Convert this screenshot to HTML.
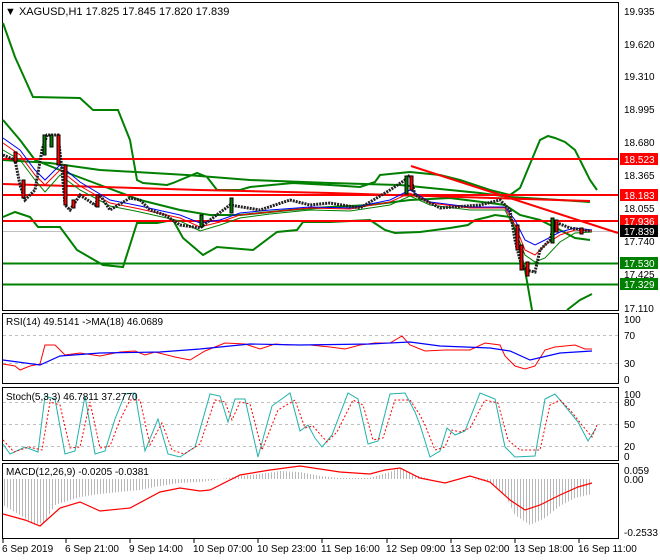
<!DOCTYPE html>
<html><head><meta charset="utf-8"><style>
html,body{margin:0;padding:0;background:#fff;}
svg{display:block;font-family:"Liberation Sans",sans-serif;}
</style></head><body>
<svg width="660" height="560" viewBox="0 0 660 560" xmlns="http://www.w3.org/2000/svg">
<defs>
<pattern id="hist" width="3" height="10" patternUnits="userSpaceOnUse"><rect x="1" y="0" width="1" height="10" fill="#b8b8b8"/></pattern>
</defs>
<rect width="660" height="560" fill="#fff"/>
<rect x="2.5" y="2.5" width="616" height="308" fill="none" stroke="#000"/>
<rect x="2.5" y="313.5" width="616" height="70" fill="none" stroke="#000"/>
<rect x="2.5" y="387.5" width="616" height="73" fill="none" stroke="#000"/>
<rect x="2.5" y="463.5" width="616" height="75" fill="none" stroke="#000"/>

<g fill="none">
<line x1="3" y1="231.5" x2="618" y2="231.5" stroke="#c0c0c0"/>
<polyline stroke="#008000" stroke-width="2" points="3,23 15,57 33,97 80,98 93,110 118,110 130,140 137,180 143,183 167,185 173,183 197,173 207,177 217,190 240,190 250,187 293,183 330,185 360,187 375,182 380,175 410,172 440,175 460,180 490,190 510,195 520,188 540,140 548,136 555,138 565,142 575,150 590,180 597,190"/>
<polyline stroke="#008000" stroke-width="2" points="3,217 15,212 30,217 38,227 60,227 77,250 103,265 123,267 137,223 157,223 173,220 183,238 203,255 217,247 253,250 277,232 297,230 303,222 330,222 370,220 385,230 395,233 420,232 450,228 468,225 475,220 488,217 495,215 510,217 515,230 525,270 532,310"/>
<polyline stroke="#008000" stroke-width="2" points="567,310 580,300 592,294"/>
<polyline stroke="#008000" stroke-width="2" points="3,120 20,140 35,160 60,170 100,185 140,200 180,210 210,215 240,215 290,210 330,207 370,205 410,200 450,198 490,203 505,205 520,215 540,220 560,230 575,238 590,240"/>
<polyline stroke="#008000" stroke-width="2" points="3,160 50,163 100,170 187,175 250,180 330,183 400,185 480,193 510,197 560,200 590,202"/>
<line x1="3" y1="159" x2="618" y2="159" stroke="#f00" stroke-width="2"/>
<line x1="3" y1="195" x2="618" y2="195" stroke="#f00" stroke-width="2"/>
<line x1="3" y1="221" x2="618" y2="221" stroke="#f00" stroke-width="2"/>
<polyline stroke="#f00" stroke-width="2" points="3,184 200,190 330,193 590,201"/>
<line x1="411" y1="166" x2="618" y2="233" stroke="#f00" stroke-width="2"/>
<line x1="3" y1="263.5" x2="618" y2="263.5" stroke="#008000" stroke-width="2"/>
<line x1="3" y1="284.5" x2="618" y2="284.5" stroke="#008000" stroke-width="2"/>
<polyline stroke="#0000ff" points="3,138 20,150 35,170 45,180 60,165 80,182 110,200 140,206 180,215 200,223 220,220 240,213 270,210 310,207 350,208 390,200 410,190 430,202 470,207 505,207 515,220 525,240 535,245 545,240 560,232 575,228 592,230"/>
<polyline stroke="#f00" points="3,143 20,155 35,175 45,185 60,170 80,186 110,203 140,209 180,218 200,227 220,222 240,215 270,212 310,208 350,209 390,202 410,193 430,203 470,208 505,208 515,225 525,250 535,255 545,245 560,235 575,230 592,231"/>
<polyline stroke="#008000" points="3,150 20,160 35,180 45,192 60,175 80,190 110,206 140,212 180,221 200,231 220,225 240,218 270,214 310,210 350,211 390,205 410,196 430,205 470,210 505,210 515,230 525,255 535,262 545,258 560,242 575,233 592,232"/>
<polyline stroke="#222" stroke-width="3" stroke-dasharray="2,1" points="3,155 15,160 20,185 25,200 35,190 42,150 47,135 58,135 62,170 65,205 70,210 80,195 95,205 100,195 110,210 130,198 140,200 150,210 165,215 180,225 200,228 210,220 230,205 260,210 290,200 310,205 330,203 360,208 390,190 405,180 410,175 415,195 440,208 480,205 500,200 510,210 515,240 520,260 525,270 535,272 540,250 550,240 555,222 570,228 590,231"/>
</g>
<g stroke="#000">
<rect x="14" y="152" width="3" height="10" fill="#f00"/><rect x="22" y="180" width="3" height="18" fill="#f00"/>
<rect x="43" y="135" width="3" height="20" fill="#008000"/><rect x="50" y="135" width="3" height="12" fill="#008000"/>
<rect x="57" y="135" width="3" height="30" fill="#f00"/><rect x="64" y="165" width="3" height="40" fill="#f00"/>
<rect x="72" y="200" width="3" height="8" fill="#f00"/><rect x="96" y="195" width="3" height="12" fill="#f00"/>
<rect x="200" y="215" width="3" height="12" fill="#008000"/><rect x="230" y="198" width="3" height="15" fill="#008000"/>
<rect x="405" y="176" width="3" height="18" fill="#008000"/><rect x="410" y="176" width="3" height="14" fill="#f00"/>
<rect x="516" y="225" width="3" height="25" fill="#f00"/><rect x="520" y="245" width="3" height="25" fill="#f00"/>
<rect x="526" y="262" width="3" height="14" fill="#f00"/><rect x="551" y="218" width="3" height="25" fill="#008000"/>
<rect x="555" y="220" width="3" height="12" fill="#f00"/><rect x="580" y="228" width="3" height="6" fill="#f00"/>
</g>
<text x="5" y="15" font-size="11">▼ XAGUSD,H1  17.825 17.845 17.820 17.839</text>

<g font-size="10" fill="#000">
<text x="624" y="15">19.935</text><text x="624" y="48">19.620</text><text x="624" y="80">19.310</text>
<text x="624" y="113">18.995</text><text x="624" y="146">18.680</text><text x="624" y="179">18.365</text>
<text x="624" y="212">18.055</text><text x="624" y="245">17.740</text><text x="624" y="278">17.425</text>
<text x="624" y="312">17.110</text>
</g>
<g font-size="10" fill="#fff">
<rect x="620" y="153" width="38" height="12" fill="#f00"/><text x="624" y="163">18.523</text>
<rect x="620" y="189" width="38" height="12" fill="#f00"/><text x="624" y="199">18.183</text>
<rect x="620" y="215" width="38" height="12" fill="#f00"/><text x="624" y="225">17.936</text>
<rect x="620" y="225" width="38" height="12" fill="#000"/><text x="624" y="235">17.839</text>
<rect x="620" y="257" width="38" height="12" fill="#008000"/><text x="624" y="267">17.530</text>
<rect x="620" y="278" width="38" height="12" fill="#008000"/><text x="624" y="288">17.329</text>
</g>

<g fill="none">
<line x1="3" y1="335.5" x2="618" y2="335.5" stroke="#c0c0c0" stroke-dasharray="3,3"/>
<line x1="3" y1="363.5" x2="618" y2="363.5" stroke="#c0c0c0" stroke-dasharray="3,3"/>
<polyline stroke="#f00" points="3,364 15,366 20,370 30,366 40,364 45,345 55,345 65,355 80,353 100,356 120,352 135,351 145,355 155,352 175,357 190,360 205,351 225,343 245,344 260,349 275,344 290,345 310,345 330,347 345,349 360,345 375,343 390,343 402,336 410,345 425,351 445,350 470,350 485,343 500,345 505,356 515,366 525,369 535,366 545,350 555,347 575,345 585,349 592,349"/>
<polyline stroke="#00f" stroke-width="1.2" points="3,360 40,365 60,356 100,353 160,352 200,349 250,344 300,345 370,344 410,342 440,346 490,348 510,351 530,360 560,353 592,351"/>
</g>
<text x="6" y="325" font-size="10">RSI(14) 49.5141  -&gt;MA(18) 46.0689</text>
<g font-size="10"><text x="624" y="323">100</text><text x="624" y="339">70</text><text x="624" y="367">30</text><text x="624" y="383">0</text></g>

<g fill="none">
<line x1="3" y1="402.5" x2="618" y2="402.5" stroke="#c0c0c0" stroke-dasharray="3,3"/>
<line x1="3" y1="424.5" x2="618" y2="424.5" stroke="#c0c0c0" stroke-dasharray="3,3"/>
<line x1="3" y1="446.5" x2="618" y2="446.5" stroke="#c0c0c0" stroke-dasharray="3,3"/>
<polyline stroke="#20b2aa" points="3,444 10,454 25,447 38,452 45,396 55,399 65,454 75,451 85,396 95,454 105,451 115,419 125,394 135,393 145,451 158,419 168,454 180,457 195,447 210,394 220,396 228,422 235,399 245,399 258,457 272,406 290,393 300,431 308,425 315,438 322,447 332,435 348,393 358,399 368,444 378,441 390,394 405,393 415,412 420,425 430,457 440,451 447,428 455,435 465,431 480,393 495,399 505,447 515,457 535,456 545,399 555,394 565,406 578,422 588,441 596,428"/>
<polyline stroke="#f00" stroke-dasharray="2,2" points="3,440 14,452 29,447 42,450 50,402 60,405 70,448 80,447 90,402 100,448 110,446 120,420 130,400 140,400 150,445 162,423 172,450 184,454 200,444 215,400 225,402 232,420 240,402 250,404 262,450 278,410 295,400 305,428 313,426 320,434 327,442 337,432 353,400 363,405 373,440 383,438 395,400 410,400 420,415 425,425 435,450 445,447 452,430 460,432 470,428 485,400 498,403 508,440 520,450 540,450 550,405 560,400 570,410 582,425 592,437 597,425"/>
</g>
<text x="6" y="400" font-size="10">Stoch(5,3,3) 46.7811 37.2770</text>
<g font-size="10"><text x="624" y="398">100</text><text x="624" y="406">80</text><text x="624" y="428">50</text><text x="624" y="450">20</text><text x="624" y="460">0</text></g>

<polygon fill="url(#hist)" points="3,479 3,505 20,515 35,525 45,522 55,505 80,497 100,494 120,492 140,490 160,486 180,483 200,482 215,480 240,476 260,474 280,471 300,472 320,476 340,478 370,478 390,472 400,468 415,475 430,479 470,479 490,482 505,495 515,515 530,525 545,518 560,506 575,498 592,494 592,479"/>
<polyline fill="none" stroke="#f00" stroke-width="1.2" points="3,514 25,520 40,526 60,508 80,502 100,511 130,508 160,492 180,488 200,491 210,490 240,475 270,470 300,466 340,472 370,474 385,470 400,468 420,478 445,483 470,476 490,482 510,500 525,510 540,505 560,495 578,487 592,483"/>
<text x="6" y="475" font-size="10">MACD(12,26,9) -0.0205 -0.0381</text>
<g font-size="10"><text x="624" y="474">0.059</text><text x="624" y="483">0.00</text><text x="624" y="536">-0.2533</text></g>

<g stroke="#000">
<line x1="3" y1="539" x2="3" y2="543"/><line x1="66" y1="539" x2="66" y2="543"/><line x1="130" y1="539" x2="130" y2="543"/>
<line x1="194" y1="539" x2="194" y2="543"/><line x1="258" y1="539" x2="258" y2="543"/><line x1="322" y1="539" x2="322" y2="543"/>
<line x1="387" y1="539" x2="387" y2="543"/><line x1="451" y1="539" x2="451" y2="543"/><line x1="515" y1="539" x2="515" y2="543"/>
<line x1="579" y1="539" x2="579" y2="543"/>
</g>
<g font-size="10">
<text x="2" y="552">6 Sep 2019</text><text x="65" y="552">6 Sep 21:00</text><text x="129" y="552">9 Sep 14:00</text>
<text x="193" y="552">10 Sep 07:00</text><text x="257" y="552">10 Sep 23:00</text><text x="321" y="552">11 Sep 16:00</text>
<text x="386" y="552">12 Sep 09:00</text><text x="450" y="552">13 Sep 02:00</text><text x="514" y="552">13 Sep 18:00</text>
<text x="578" y="552">16 Sep 11:00</text>
</g>
</svg>
</body></html>
